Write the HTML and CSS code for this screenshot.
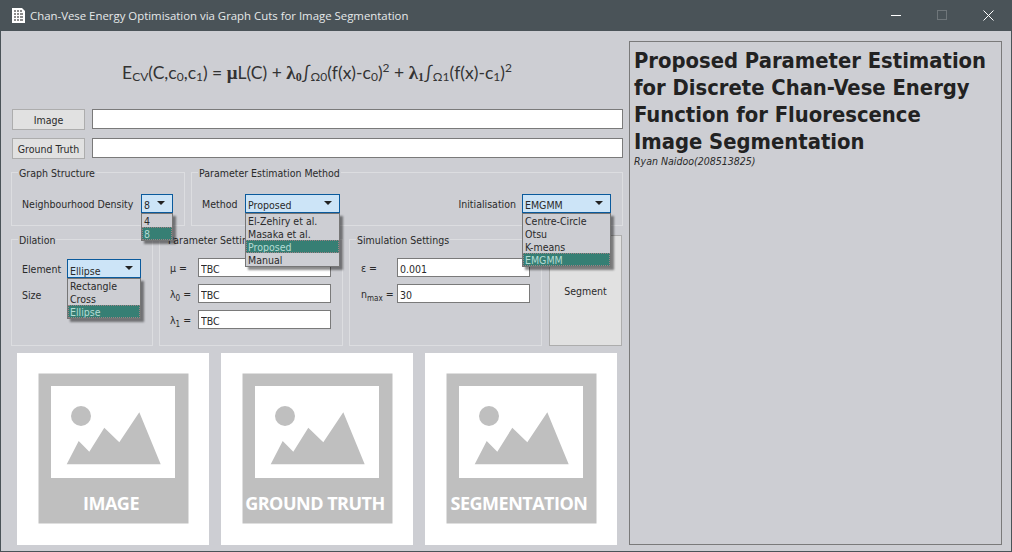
FILE: index.html
```html
<!DOCTYPE html>
<html lang="en">
<head>
    <meta charset="UTF-8">
    <meta name="viewport" content="width=device-width, initial-scale=1.0">
    <title>Chan-Vese Energy Optimisation via Graph Cuts for Image Segmentation</title>
    <link rel="stylesheet" href="styles.css">
</head>
<body>
    <div class="window">
        <div class="titlebar">
            <svg class="app-icon" width="13" height="15" viewBox="0 0 13 15">
                <path d="M0 0h10l3 3v12H0z" fill="#fff"/>
                <path d="M2 2h2v2H2zM5 2h2v2H5zM8 2h2v2H8zM2 5h2v2H2zM5 5h2v2H5zM8 5h3v2H8zM2 8h2v2H2zM5 8h2v2H5zM8 8h3v2H8zM2 11h2v2H2zM5 11h2v2H5zM8 11h3v2H8z" fill="#8c8c8c"/>
            </svg>
            <span class="window-title">Chan-Vese Energy Optimisation via Graph Cuts for Image Segmentation</span>
            <div class="window-buttons">
                <svg width="11" height="11" viewBox="0 0 11 11"><path d="M0 5.5h10" stroke="#fff"/></svg>
                <svg width="11" height="11" viewBox="0 0 11 11"><rect x="0.5" y="0.5" width="9" height="9" fill="none" stroke="#6f767a"/></svg>
                <svg width="11" height="11" viewBox="0 0 11 11"><path d="M0.5 0.5l10 10M10.5 0.5l-10 10" stroke="#fff"/></svg>
            </div>
        </div>

        <div class="main">
            <div class="left">
                <div class="equation">E<sub>CV</sub>(C,c<sub>0</sub>,c<sub>1</sub>) = <b>μ</b>L(C) + <b>λ<sub>0</sub></b>∫<sub>Ω0</sub>(f(x)-c<sub>0</sub>)<sup>2</sup> + <b>λ<sub>1</sub></b>∫<sub>Ω1</sub>(f(x)-c<sub>1</sub>)<sup>2</sup></div>

                <div class="file-rows">
                    <button class="btn" type="button">Image</button>
                    <input class="field" type="text">
                    <button class="btn" type="button">Ground Truth</button>
                    <input class="field" type="text">
                </div>

                <div class="groups-top">
                    <fieldset class="group group-inline">
                        <legend>Graph Structure</legend>
                        <span class="lbl">Neighbourhood Density</span>
                        <div class="combo combo-density">
                            <div class="combo-value">8</div>
                            <ul class="combo-list">
                                <li>4</li>
                                <li class="selected">8</li>
                            </ul>
                        </div>
                    </fieldset>
                    <fieldset class="group group-inline">
                        <legend>Parameter Estimation Method</legend>
                        <span class="lbl lbl-method">Method</span>
                        <div class="combo combo-method">
                            <div class="combo-value">Proposed</div>
                            <ul class="combo-list">
                                <li>El-Zehiry et al.</li>
                                <li>Masaka et al.</li>
                                <li class="selected">Proposed</li>
                                <li>Manual</li>
                            </ul>
                        </div>
                        <span class="lbl lbl-init">Initialisation</span>
                        <div class="combo combo-init">
                            <div class="combo-value">EMGMM</div>
                            <ul class="combo-list">
                                <li>Centre-Circle</li>
                                <li>Otsu</li>
                                <li>K-means</li>
                                <li class="selected">EMGMM</li>
                            </ul>
                        </div>
                    </fieldset>
                </div>

                <div class="groups-bottom">
                    <fieldset class="group group-dilation">
                        <legend>Dilation</legend>
                        <div class="form-grid">
                            <span class="lbl">Element</span>
                            <div class="combo combo-element">
                                <div class="combo-value">Ellipse</div>
                                <ul class="combo-list">
                                    <li>Rectangle</li>
                                    <li>Cross</li>
                                    <li class="selected">Ellipse</li>
                                </ul>
                            </div>
                            <span class="lbl">Size</span>
                        </div>
                    </fieldset>
                    <fieldset class="group group-params">
                        <legend>Parameter Settings</legend>
                        <div class="form-grid">
                            <span class="lbl">μ =</span>
                            <input class="field" type="text" value="TBC">
                            <span class="lbl">λ<sub>0</sub> =</span>
                            <input class="field" type="text" value="TBC">
                            <span class="lbl">λ<sub>1</sub> =</span>
                            <input class="field" type="text" value="TBC">
                        </div>
                    </fieldset>
                    <fieldset class="group group-sim">
                        <legend>Simulation Settings</legend>
                        <div class="form-grid">
                            <span class="lbl">ε =</span>
                            <input class="field" type="text" value="0.001">
                            <span class="lbl">n<sub>max</sub> =</span>
                            <input class="field" type="text" value="30">
                        </div>
                    </fieldset>
                    <button class="btn btn-segment" type="button">Segment</button>
                </div>

                <div class="previews">
                    <svg class="preview" viewBox="0 0 192 192" width="192" height="192">
                        <rect width="192" height="192" fill="#fff"/>
                        <rect x="21.5" y="20.5" width="150" height="150" fill="#bfbfbf"/>
                        <rect x="34" y="33" width="124" height="92" fill="#fff"/>
                        <circle cx="64" cy="63" r="10" fill="#bfbfbf"/>
                        <polygon points="49.7,111.3 61.7,88 72.3,98.7 87.3,74.7 102.3,89.3 122.3,59.3 143.7,111.3" fill="#bfbfbf"/>
                        <text x="94" y="157" class="preview-text">IMAGE</text>
                    </svg>
                    <svg class="preview" viewBox="0 0 192 192" width="192" height="192">
                        <rect width="192" height="192" fill="#fff"/>
                        <rect x="21.5" y="20.5" width="150" height="150" fill="#bfbfbf"/>
                        <rect x="34" y="33" width="124" height="92" fill="#fff"/>
                        <circle cx="64" cy="63" r="10" fill="#bfbfbf"/>
                        <polygon points="49.7,111.3 61.7,88 72.3,98.7 87.3,74.7 102.3,89.3 122.3,59.3 143.7,111.3" fill="#bfbfbf"/>
                        <text x="94" y="157" class="preview-text">GROUND TRUTH</text>
                    </svg>
                    <svg class="preview" viewBox="0 0 192 192" width="192" height="192">
                        <rect width="192" height="192" fill="#fff"/>
                        <rect x="21.5" y="20.5" width="150" height="150" fill="#bfbfbf"/>
                        <rect x="34" y="33" width="124" height="92" fill="#fff"/>
                        <circle cx="64" cy="63" r="10" fill="#bfbfbf"/>
                        <polygon points="49.7,111.3 61.7,88 72.3,98.7 87.3,74.7 102.3,89.3 122.3,59.3 143.7,111.3" fill="#bfbfbf"/>
                        <text x="94" y="157" class="preview-text">SEGMENTATION</text>
                    </svg>
                </div>
            </div>

            <div class="info-panel">
                <h1>Proposed Parameter Estimation for Discrete Chan-Vese Energy Function for Fluorescence Image Segmentation</h1>
                <p class="author">Ryan Naidoo(208513825)</p>
            </div>
        </div>
    </div>
</body>
</html>
```

FILE: styles.css
```css
* {
    box-sizing: border-box;
}

body {
    margin: 0;
    background-color: #cdced3;
    font-family: "DejaVu Sans", sans-serif;
    font-stretch: condensed;
    font-size: 10.5px;
    color: #2a2a2a;
}

.window {
    width: 1012px;
    height: 552px;
    overflow: hidden;
    border: 1px solid #4a5358;
    border-top: none;
    background-color: #cdced3;
}

.titlebar {
    display: flex;
    align-items: center;
    height: 31px;
    padding-left: 11px;
    background-color: #4a5358;
    color: #e6e9ea;
}

.app-icon {
    margin-right: 5px;
}

.window-title {
    font-family: "Open Sans", sans-serif;
    font-stretch: normal;
    font-size: 11.4px;
}

.window-buttons {
    display: flex;
    gap: 35px;
    margin-left: auto;
    padding-right: 17px;
}

.main {
    display: flex;
}

.left {
    width: 628px;
    flex-shrink: 0;
    padding-left: 10px;
}

.equation {
    height: 78px;
    padding-top: 29px;
    padding-right: 6px;
    text-align: center;
    font-family: Lato, sans-serif;
    font-stretch: normal;
    font-size: 17.5px;
    line-height: 26px;
    color: #333;
}

.equation b {
    font-family: "Liberation Serif", serif;
    font-size: 19px;
}

.equation sub,
.equation sup {
    font-size: 12px;
    line-height: 0;
}

.equation sub {
    vertical-align: -2px;
}

.equation sup {
    vertical-align: 7px;
}

.file-rows {
    display: grid;
    grid-template-columns: 73px 531px;
    gap: 8px 7px;
    padding-left: 1px;
}

.btn {
    height: 21px;
    padding: 1px 0 0;
    border: 1px solid #adadad;
    background-color: #e1e1e1;
    color: #2a2a2a;
    font: inherit;
    font-stretch: condensed;
}

.field {
    width: 100%;
    height: 20px;
    padding: 2px 2px 0;
    border: 1px solid #7a7a7a;
    background-color: #fff;
    color: #2a2a2a;
    font: inherit;
    font-stretch: condensed;
    outline: none;
}

.group {
    min-width: 0;
    margin: 0;
    padding: 0;
    border: 1px solid #dcdde0;
}

.group legend {
    margin-left: -4px;
    padding: 1px 1px 0;
    line-height: 14px;
}

.groups-top {
    display: grid;
    grid-template-columns: 174px 432px;
    gap: 6px;
    margin-top: 6px;
}

.group-inline {
    display: flex;
    align-items: center;
    height: 61px;
    padding: 13px 11px 12px 10px;
}

.lbl {
    padding-top: 1px;
    white-space: nowrap;
}

.lbl-method {
    width: 43px;
}

.combo {
    position: relative;
    height: 19px;
}

.combo-value {
    display: flex;
    align-items: center;
    justify-content: space-between;
    height: 19px;
    padding: 4px 7px 0 2px;
    border: 1px solid #0a5a9c;
    background-color: #cce4f7;
}

.combo-value::after {
    content: "";
    margin-top: -5px;
    border-top: 4px solid #222;
    border-left: 4px solid transparent;
    border-right: 4px solid transparent;
}

.combo-list {
    position: absolute;
    top: 19px;
    left: 0;
    z-index: 2;
    width: 100%;
    margin: 0;
    padding: 0;
    list-style: none;
    border: 1px solid #767676;
    background-color: #cdced3;
    box-shadow: 3px 3px 2px rgba(0, 0, 0, 0.45);
}

.combo-list li {
    height: 13px;
    padding: 1px 2px 0;
    line-height: 13px;
    white-space: nowrap;
}

.combo-list .selected {
    outline: 1px dotted #a08084;
    outline-offset: -1px;
    background-color: #367f74;
    color: #b4dcd4;
}

.combo-density {
    width: 32px;
    margin-left: auto;
}

.combo-method {
    width: 95px;
}

.combo-init {
    width: 89px;
    margin-left: 6px;
}

.combo-element {
    width: 74px;
}

.lbl-init {
    margin-left: auto;
}

.lbl sub {
    font-size: 8px;
    line-height: 0;
}

.groups-bottom {
    display: grid;
    grid-template-columns: 142px 184px 193px 73px;
    column-gap: 6px;
    margin-top: 6px;
}

.group-dilation,
.group-params,
.group-sim {
    height: 114px;
    padding-top: 11px;
    padding-left: 10px;
}

.group-sim {
    padding-left: 11px;
}

.group-params legend {
    margin-left: -3px;
}

.group-sim legend {
    margin-left: -5px;
}

.form-grid {
    display: grid;
    grid-auto-rows: 19px;
    row-gap: 7px;
    align-items: center;
}

.group-dilation .form-grid {
    grid-template-columns: 45px 74px;
    margin-top: 1px;
}

.group-params .form-grid {
    grid-template-columns: 28px 133px;
}

.group-sim .form-grid {
    grid-template-columns: 36px 133px;
}

.group-params .field,
.group-sim .field {
    height: 19px;
}

.btn-segment {
    align-self: end;
    width: 73px;
    height: 111px;
    margin-left: 1px;
}

.previews {
    display: flex;
    gap: 12px;
    margin-top: 7px;
    padding-left: 6px;
}

.preview-text {
    fill: #fff;
    font-family: "Open Sans", sans-serif;
    font-stretch: normal;
    font-size: 18px;
    font-weight: 700;
    letter-spacing: -0.5px;
    text-anchor: middle;
}

.info-panel {
    width: 373px;
    height: 504px;
    margin-top: 10px;
    padding: 5px 4px;
    border: 1px solid #7a7a7a;
}

.info-panel h1 {
    max-width: 356px;
    margin: 0;
    font-size: 21.8px;
    font-weight: 700;
    line-height: 27px;
    color: #222;
}

.author {
    margin: 0;
    font-style: italic;
    line-height: 13px;
}
```
